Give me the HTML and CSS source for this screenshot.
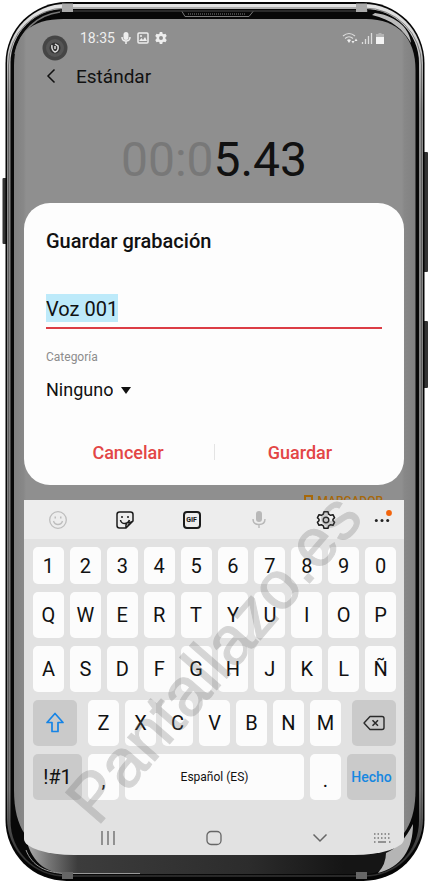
FILE: index.html
```html
<!DOCTYPE html>
<html lang="es">
<head>
<meta charset="utf-8">
<meta name="viewport" content="width=device-width, initial-scale=1">
<title>Guardar grabación</title>
<link rel="stylesheet" href="styles.css">
</head>
<body>
<div class="phone">
  <svg class="frame" viewBox="0 0 428 884" preserveAspectRatio="none" aria-hidden="true">
    <defs>
      <linearGradient id="metal" x1="0" y1="0" x2="0" y2="1">
        <stop offset="0" stop-color="#e4e4e4"/><stop offset=".04" stop-color="#d0d0d0"/>
        <stop offset=".12" stop-color="#8c8c8c"/><stop offset=".9" stop-color="#777"/><stop offset="1" stop-color="#1c1c1c"/>
      </linearGradient>
      <linearGradient id="chin" x1="0" y1="0" x2="1" y2="0">
        <stop offset="0" stop-color="#b0b0b0"/><stop offset=".06" stop-color="#777"/><stop offset=".14" stop-color="#3c3c3c"/>
        <stop offset=".6" stop-color="#2c2c2c"/><stop offset=".86" stop-color="#151515"/>
      </linearGradient>
      <linearGradient id="edge" x1="0" y1="0" x2="1" y2="0">
        <stop offset="0" stop-color="#808080"/><stop offset=".024" stop-color="#888"/><stop offset=".03" stop-color="#8f8f8f"/>
        <stop offset=".966" stop-color="#8f8f8f"/><stop offset=".972" stop-color="#888"/><stop offset="1" stop-color="#808080"/>
      </linearGradient>
    </defs>
    <rect x="2.5" y="178" width="5" height="66" rx="1" fill="#333"/>
    <rect x="422" y="152" width="6" height="120" rx="1" fill="#333"/>
    <rect x="422" y="321" width="6" height="67" rx="1" fill="#333"/>
    <rect x="5.5" y="2" width="419" height="879" rx="61" fill="#050505"/>
    <rect x="7" y="4" width="416" height="873" rx="59" fill="url(#metal)"/>
    <rect x="8.500" y="8" width="413" height="868" rx="57" fill="none" stroke="#444" stroke-width=".6"/>
    <rect x="10.5" y="9" width="408.500" height="866" rx="54" fill="#080808"/>
    <path d="M60 11H368" stroke="#2a2a2a" stroke-width="2"/>
    <path d="M26 838C32 866 50 873 66 874H364C380 874 390 868 396 846V838Z" fill="url(#chin)"/>
    <path d="M26 850C32 866 46 873 66 873.500H140" fill="none" stroke="#999"/>
    <path d="M375 13C398 16 410 30 411 43C403 29 392 20 372 15Z" fill="#bbb"/>
    <path d="M60 12C36 15 20 32 15 54" fill="none" stroke="#777" stroke-width="1.500"/>
    <path d="M14 66C14 34 30 19 64 19H366C398 19 415.500 38 415.500 70V790C415.500 822 404 842 380 850H50C30 846 14 830 14 790Z" fill="url(#edge)"/>
    <path d="M386 853Q402 846 413 824C413 850 401 867 378 873Q386 864 386 853Z" fill="#b5b5b5"/>
    <path d="M62 3.500H73V12H62ZM356 3.500H367V12H356Z" fill="#aaa"/>
    <path d="M62 872H73V879H62ZM356 872H367V879H356Z" fill="#666"/>
    <path d="M182 11.500L185 16.500H249L253 11.500" fill="none" stroke="#777"/>
    <path d="M188 14H246" stroke="#444" stroke-width="2" stroke-dasharray="1 1"/>
  </svg>

  <main class="screen">
    <div class="status">
      <span class="camera"><svg viewBox="0 0 26 26" width="26" height="26"><circle cx="13" cy="13" r="12.500" fill="#454545"/><circle cx="13" cy="13" r="9" fill="#555"/><circle cx="13" cy="13" r="5.500" fill="#333"/><path d="M10 10Q9 15 13 17Q17 16 16 11L13 9M13 11V14" fill="none" stroke="#ddd" stroke-width="1.500"/></svg></span>
      <span>18:35</span>
      <svg width="10" height="12" viewBox="0 0 10 12"><rect x="2.500" y="0" width="5" height="8" rx="2.500" fill="#eee"/><path d="M1 5Q1 9 5 9T9 5M5 9V12" fill="none" stroke="#eee" stroke-width="1.500"/></svg>
      <svg width="12" height="12" viewBox="0 0 12 12"><rect x="1" y="1" width="10" height="10" rx="1" fill="none" stroke="#eee" stroke-width="1.500"/><path d="M2 9L4.500 6L6 8L8 5L10 9Z" fill="#eee"/><circle cx="4" cy="4" r="1" fill="#eee"/></svg>
      <svg width="12" height="12" viewBox="0 0 24 24"><path fill="#eee" fill-rule="evenodd" d="M9.500 0H14.500L15.200 3.300L17.600 4.700L21 3.600L23.500 8L20.900 10.400V13.600L23.500 16L21 20.400L17.600 19.300L15.200 20.700L14.500 24H9.500L8.800 20.700L6.400 19.300L3 20.400L.5 16L3.100 13.600V10.400L.5 8L3 3.600L6.400 4.700L8.800 3.300ZM12 8A4 4 0 1 0 12 16A4 4 0 1 0 12 8Z"/></svg>
      <span class="signals">
        <svg width="16" height="12" viewBox="0 0 16 12"><g fill="none" stroke="#ddd" stroke-width="1.200"><path d="M1 4Q7-1 13 4"/><path d="M3 6.500Q7 3 11 6.500"/></g><path d="M5 8Q7 6.500 9 8L7 11Z" fill="#eee"/><path d="M9.500 9L11 11.500L12.500 9ZM12.500 9L14 6.500L15.500 9Z" fill="#eee"/></svg>
        <svg width="12" height="12" viewBox="0 0 12 12"><path d="M1.500 12V10M4.500 12V7M7.500 12V4M10.500 12V1" stroke="#ddd" stroke-width="1.300"/></svg>
        <svg width="8" height="12" viewBox="0 0 8 12"><path d="M2.500 1H5.500V2H8V5H0V2H2.500Z" fill="#b4b4b4"/><path d="M0 5H8V12H0Z" fill="#f4f4f4"/></svg>
      </span>
    </div>

    <header class="appbar">
      <button class="back" type="button" aria-label="Atrás"><svg width="10" height="16" viewBox="0 0 10 16"><path d="M8.500 1.500L2 8L8.500 14.500" fill="none" stroke="#111" stroke-width="1.500"/></svg></button>
      <h1>Estándar</h1>
    </header>

    <div class="timer"><span class="idle">00:0</span>5.43</div>

    <form class="dialog">
      <h2>Guardar grabación</h2>
      <div class="field"><input type="text" value="Voz 001" aria-label="Nombre"></div>
      <label class="caption" for="category">Categoría</label>
      <div class="picker">
        <select id="category"><option>Ninguno</option></select>
        <svg width="10" height="7" viewBox="0 0 10 7"><path d="M0 0H10L5 7Z" fill="#111"/></svg>
      </div>
      <div class="actions">
        <button type="button">Cancelar</button>
        <button type="button">Guardar</button>
      </div>
    </form>

    <div class="marker">
      <svg width="9" height="12" viewBox="0 0 9 12"><path d="M1 1H8V12H1Z" fill="none" stroke="#a76809" stroke-width="2"/></svg>
      <span>MARCADOR</span>
    </div>

    <section class="keyboard" aria-label="Teclado">
      <div class="tools">
        <button type="button" aria-label="Emojis"><svg width="20" height="20" viewBox="0 0 20 20"><g fill="none" stroke="#bdbdbd" stroke-width="1.300"><circle cx="10" cy="10" r="8.300"/><path d="M5.500 11Q6.500 14.500 10 14.500T14.500 11"/></g><path d="M6.500 6.500H8V8.500H6.500ZM12 6.500H13.500V8.500H12Z" fill="#bdbdbd"/></svg></button>
        <button type="button" aria-label="Stickers"><svg width="20" height="20" viewBox="0 0 20 20"><path d="M4.500 2H15.500Q18 2 18 4.500V11L11 18H4.500Q2 18 2 15.500V4.500Q2 2 4.500 2ZM11 18Q10.500 12.500 13 12.500Q15 13 18 11M5.500 10Q6 13.500 10 13.500Q13 13.500 14.500 10" fill="none" stroke="#1b1b1b" stroke-width="1.500" stroke-linejoin="round"/><path d="M12 16L13 13.500L16 13Z" fill="#1b1b1b"/><circle cx="7" cy="7" r="1" fill="#1b1b1b"/><circle cx="13" cy="7" r="1" fill="#1b1b1b"/></svg></button>
        <button type="button" aria-label="GIF"><span class="gif">GIF</span></button>
        <button type="button" aria-label="Dictado"><svg width="20" height="20" viewBox="0 0 20 20"><rect x="7" y="1" width="6" height="11" rx="3" fill="#b8b8b8"/><path d="M4 9Q4 14.500 10 14.500T16 9M10 14.500V18" fill="none" stroke="#b8b8b8" stroke-width="1.400"/></svg></button>
        <button type="button" aria-label="Ajustes"><svg width="20" height="20" viewBox="0 0 20 20"><path d="M8 1.800H12L12.700 4.200L14.600 5.300L17 4.700L18.600 7.800L17 9.300V10.700L18.600 12.200L17 15.300L14.600 14.700L12.700 15.800L12 18.200H8L7.300 15.800L5.400 14.700L3 15.300L1.400 12.200L3 10.700V9.300L1.400 7.800L3 4.700L5.400 5.300L7.300 4.200Z" fill="none" stroke="#1b1b1b" stroke-width="1.500" stroke-linejoin="round"/><circle cx="10" cy="10" r="2.800" fill="none" stroke="#1b1b1b" stroke-width="1.400"/></svg></button>
        <button type="button" aria-label="Más"><svg width="20" height="20" viewBox="0 0 20 20"><g fill="#222"><circle cx="4.300" cy="10.500" r="1.500"/><circle cx="10" cy="10.500" r="1.500"/><circle cx="15.700" cy="10.500" r="1.500"/></g><circle cx="17" cy="3" r="2.900" fill="#f2640c"/></svg></button>
      </div>
      <div class="keys">
        <div class="row digits"><button type="button">1</button><button type="button">2</button><button type="button">3</button><button type="button">4</button><button type="button">5</button><button type="button">6</button><button type="button">7</button><button type="button">8</button><button type="button">9</button><button type="button">0</button></div>
        <div class="row"><button type="button">Q</button><button type="button">W</button><button type="button">E</button><button type="button">R</button><button type="button">T</button><button type="button">Y</button><button type="button">U</button><button type="button">I</button><button type="button">O</button><button type="button">P</button></div>
        <div class="row"><button type="button">A</button><button type="button">S</button><button type="button">D</button><button type="button">F</button><button type="button">G</button><button type="button">H</button><button type="button">J</button><button type="button">K</button><button type="button">L</button><button type="button">Ñ</button></div>
        <div class="row lower">
          <button type="button" class="dark" aria-label="Mayúsculas"><svg width="20" height="22" viewBox="0 0 20 22"><path d="M10 1.500L18 10.500H13V19.500H7V10.500H2Z" fill="none" stroke="#1684e6" stroke-width="1.700" stroke-linejoin="round"/></svg></button>
          <div class="row letters"><button type="button">Z</button><button type="button">X</button><button type="button">C</button><button type="button">V</button><button type="button">B</button><button type="button">N</button><button type="button">M</button></div>
          <button type="button" class="dark" aria-label="Borrar"><svg width="22" height="16" viewBox="0 0 22 16"><path d="M7 1.500H19Q21 1.500 21 3.500V12.500Q21 14.500 19 14.500H7L1 8Z" fill="none" stroke="#2a2a2a" stroke-width="1.400" stroke-linejoin="round"/><path d="M9.500 5.200L15 10.800M15 5.200L9.500 10.800" stroke="#2a2a2a" stroke-width="1.500"/></svg></button>
        </div>
        <div class="row bottom">
          <button type="button" class="dark">!#1</button>
          <button type="button" class="point">,</button>
          <button type="button" class="space">Español (ES)</button>
          <button type="button" class="point">.</button>
          <button type="button" class="dark done">Hecho</button>
        </div>
      </div>
      <nav class="nav">
        <button type="button" aria-label="Recientes"><svg width="16" height="16" viewBox="0 0 16 16"><path d="M2 1V15M8 1V15M14 1V15" stroke="#666" stroke-width="1.300"/></svg></button>
        <button type="button" aria-label="Inicio"><svg width="16" height="16" viewBox="0 0 16 16"><rect x="1" y="1.500" width="14" height="13" rx="4" fill="none" stroke="#666" stroke-width="1.300"/></svg></button>
        <button type="button" aria-label="Ocultar teclado"><svg width="16" height="16" viewBox="0 0 16 16"><path d="M1.500 4.500L8 11L14.500 4.500" fill="none" stroke="#666" stroke-width="1.500"/></svg></button>
        <button type="button" aria-label="Cambiar teclado"><svg width="18" height="12" viewBox="0 0 18 12"><path d="M1 2H18M1 6H18M1 10H3M16 10H18" stroke="#777" stroke-width="1.500" stroke-dasharray="1.500 2"/><path d="M5 10H13" stroke="#777" stroke-width="1.500"/></svg></button>
      </nav>
    </section>
  </main>
  <div class="watermark">Pantallazo.es</div>
</div>
</body>
</html>
```
FILE: styles.css
```css
* { box-sizing: border-box; }

body {
  margin: 0;
  background: #fff;
  color: #111;
  font-family: Roboto, "Liberation Sans", sans-serif;
}

button, input, select {
  margin: 0;
  padding: 0;
  border: 0;
  background: none;
  color: inherit;
  font: inherit;
}

button {
  display: flex;
  align-items: center;
  justify-content: center;
}

svg { display: block; flex: none; }
h1, h2 { margin: 0; }

.phone {
  position: relative;
  padding: 19px 24px 29px;
  overflow: hidden;
}

.frame {
  position: absolute;
  inset: 0;
  width: 100%;
  height: 100%;
}

.screen { position: relative; }

.status {
  display: flex;
  align-items: center;
  gap: 6px;
  height: 38px;
  padding: 0 20px 0 56px;
  color: #eee;
  font-size: 14px;
}

.camera {
  position: absolute;
  left: 18px;
  top: 16px;
}

.signals {
  display: flex;
  gap: 3px;
  margin-left: auto;
}

.appbar {
  display: flex;
  align-items: center;
  gap: 20px;
  height: 38px;
  padding-left: 22px;
}

.appbar h1 {
  font-size: 19px;
  font-weight: 400;
}

.timer {
  padding-top: 22px;
  font-size: 48px;
  line-height: 86px;
  text-align: center;
}

.idle { color: #787878; }

.dialog {
  padding: 26px 22px 16px;
  border-radius: 26px;
  background: #fdfdfd;
}

.dialog h2 {
  font-size: 20px;
  font-weight: 500;
  line-height: 24px;
}

.field {
  display: flex;
  margin-top: 41px;
  padding-bottom: 5px;
  border-bottom: 2px solid #dc3d45;
}

.field input {
  field-sizing: content;
  height: 28px;
  padding-top: 2px;
  background: #bdeafa;
  font-size: 20px;
  outline: 0;
}

.caption {
  display: block;
  margin-top: 20px;
  color: #8c8c8c;
  font-size: 12px;
  line-height: 16px;
}

.picker {
  display: flex;
  align-items: center;
  gap: 8px;
  margin-top: 13px;
}

.picker select {
  field-sizing: content;
  appearance: none;
  font-size: 18px;
  line-height: 24px;
}

.actions {
  display: grid;
  grid-template-columns: 1fr 1fr;
  align-items: center;
  margin: 33px -4px 0;
}

.actions button {
  height: 34px;
  color: #e34646;
  font-size: 18px;
  font-weight: 500;
}

.actions button + button {
  background: linear-gradient(#e4e4e4, #e4e4e4) 0 50% / 1px 16px no-repeat;
}

.marker {
  display: flex;
  gap: 4px;
  justify-content: flex-end;
  height: 15px;
  padding: 10px 21px 0 0;
  overflow: hidden;
  color: #a76809;
  font-size: 12px;
  font-weight: 500;
  line-height: 12px;
}

.keyboard {
  border-radius: 0 0 50px 50px / 0 0 16px 16px;
  background: #e2e2e2;
}

.tools {
  display: grid;
  grid-template-columns: repeat(5, 67fr) 45fr;
  height: 39px;
  background: #ededed;
}

.gif {
  width: 18px;
  border: 2px solid #1b1b1b;
  border-radius: 4px;
  font-size: 7px;
  font-weight: 700;
  line-height: 14px;
  text-align: center;
}

.keys {
  display: grid;
  gap: 8px;
  padding: 8px 8px 0 9px;
}

.row { display: flex; gap: 6px; }

.row button {
  flex: 1 1 0;
  min-width: 0;
  height: 46px;
  border-radius: 5px;
  background: #fcfcfc;
  font-size: 20px;
}

.digits button { height: 37px; }
.lower { gap: 11px; }
.letters { flex: 253 1 0; }
.lower .dark { flex: 44 1 0; }
.row .dark { background: #cacaca; }

.bottom .dark { flex-grow: 49; }
.bottom .point { flex-grow: 31; padding-top: 6px; }
.bottom .space { flex-grow: 179; font-size: 12px; }
.bottom .done { color: #1687e0; font-size: 14px; font-weight: 500; }

.nav {
  display: grid;
  grid-template-columns: repeat(3, 1fr) 18px;
  padding: 21px 13px 0 31px;
}

.nav button { height: 34px; }

.watermark {
  position: absolute;
  left: 98px;
  bottom: 56px;
  color: #666;
  font-family: "Liberation Sans", sans-serif;
  font-size: 68px;
  line-height: 50px;
  white-space: nowrap;
  opacity: .25;
  -webkit-text-stroke: 1px #666;
  pointer-events: none;
  transform: rotate(-49deg);
  transform-origin: 0 100%;
}
```
